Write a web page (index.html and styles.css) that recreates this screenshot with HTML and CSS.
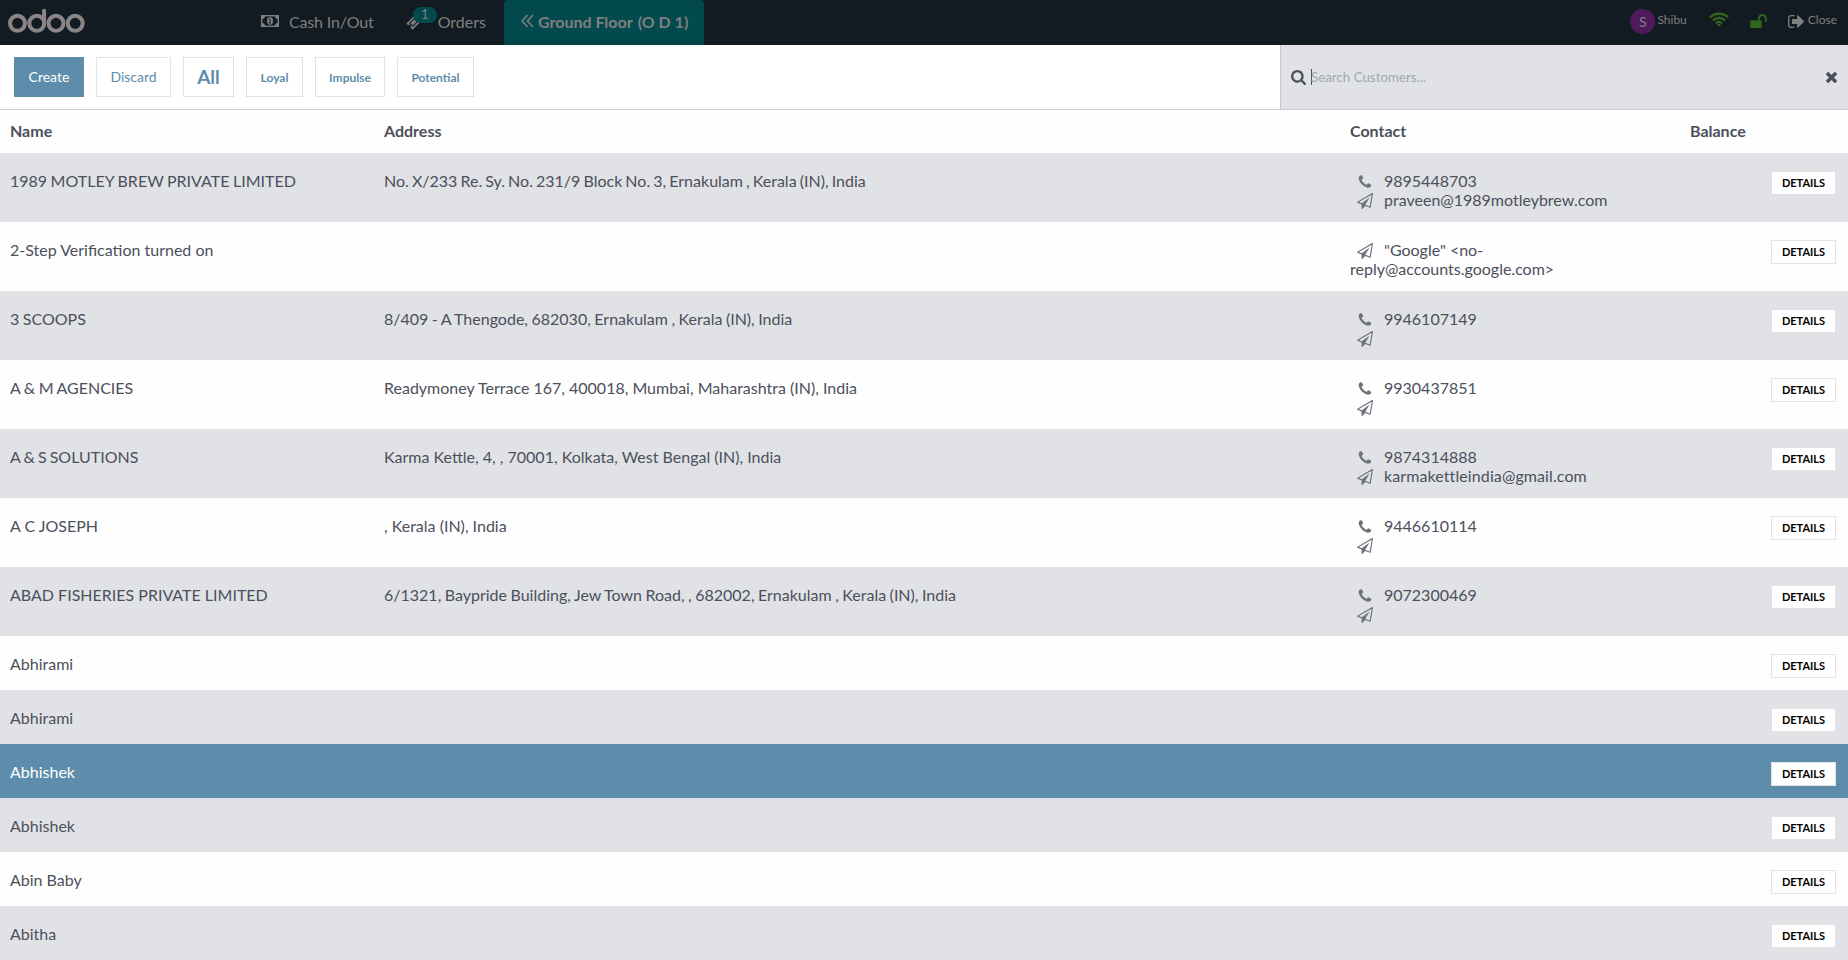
FILE: index.html
```html
<!DOCTYPE html>
<html lang="en">
<head>
<meta charset="utf-8">
<title>Odoo POS - Customers</title>
<link rel="stylesheet" href="styles.css">
</head>
<body>
<svg class="defs" width="0" height="0">
  <symbol id="phone" viewBox="0 0 1792 1792"><path d="M1600 1240q0 27-10 70.5t-21 68.5q-21 50-122 106-94 51-186 51-27 0-53-3.5t-57.5-12.5-47-14.5-55.5-20.5-49-18q-98-35-175-83-127-79-264-216t-216-264q-48-77-83-175-3-9-18-49t-20.5-55.5-14.5-47-12.5-57.5-3.5-53q0-92 51-186 56-101 106-122 25-11 68.5-21t70.5-10q14 0 21 3 18 6 53 76 11 19 30 54t35 63.5 31 53.5q3 4 17.5 25t21.5 35.5 7 28.5q0 20-28.5 50t-62 55-62 53-28.5 46q0 9 5 22.5t8.5 20.5 14 24 11.5 19q76 137 174 235t235 174q2 1 19 11.5t24 14 20.5 8.5 22.5 5q18 0 46-28.5t53-62 55-62 50-28.5q14 0 28.5 7t35.5 21.5 25 17.5q25 15 53.5 31t63.5 35 54 30q70 35 76 53 3 7 3 21z"/></symbol>
  <symbol id="plane" viewBox="0 0 1792 1792"><path d="M1764 11q33 24 27 64l-256 1536q-5 29-32 45-14 8-31 8-11 0-24-5l-527-215-298 327q-18 21-47 21-14 0-23-4-19-7-30-23.5t-11-36.5v-452l-472-193q-37-14-40-55-3-39 32-59l1664-960q35-21 68 2zm-342 1499l221-1323-1434 827 336 137 863-639-478 797z"/></symbol>
</svg>

<header class="topbar">
  <svg class="logo" viewBox="0 0 78 26" aria-label="odoo">
    <g fill="none" stroke="currentColor" stroke-width="4">
      <circle cx="9.5" cy="15.3" r="7.5"/><circle cx="28.8" cy="15.3" r="7.5"/>
      <circle cx="48" cy="15.3" r="7.5"/><circle cx="67.2" cy="15.3" r="7.5"/>
      <path d="M36.1 15.5V2.8" stroke-linecap="round"/>
    </g>
  </svg>
  <div class="nav-item cash">
    <svg class="money" viewBox="0 0 18 12"><rect x=".7" y=".7" width="16.6" height="10.6" fill="none" stroke="currentColor" stroke-width="1.4"/><path d="M1 1h3a3 3 0 0 1-3 3zM17 1v3a3 3 0 0 1-3-3zM1 11V8a3 3 0 0 1 3 3zM17 11h-3a3 3 0 0 1 3-3z" fill="currentColor"/><ellipse cx="9" cy="6" rx="3" ry="3.7" fill="currentColor"/><path d="M8 4.6l1-.7v4M7.9 8h2.2" fill="none" stroke="#131b22" stroke-width=".9"/></svg>
    <span>Cash In/Out</span>
  </div>
  <div class="nav-item orders">
    <span class="ticket-wrap">
      <svg class="ticket" viewBox="0 0 16 16"><path fill="currentColor" fill-rule="evenodd" d="M9 .4l1.7 1.7a1.9 1.9 0 0 0 2.7 2.7l2.2 2.2-8.6 8.6-2.2-2.2a1.9 1.9 0 0 0-2.7-2.7L.4 9zM8.7 3.2L3.2 8.7l4.1 4.1 5.5-5.5zM8.7 4.9l2.5 2.4-3.9 3.9-2.5-2.5z"/></svg>
      <span class="badge">1</span>
    </span>
    <span>Orders</span>
  </div>
  <div class="floor">
    <svg class="chev" viewBox="0 0 13 14"><path d="M6.6 1L1 7l5.6 6M12 1L6.4 7l5.6 6" fill="none" stroke="currentColor" stroke-width="1.6"/></svg>
    <span>Ground Floor</span><span class="table-name">(O D 1)</span>
  </div>
  <div class="status">
    <span class="avatar">S</span><span class="user">Shibu</span>
    <svg class="wifi" viewBox="0 0 20 15"><g fill="none" stroke="currentColor" stroke-width="2.4"><path d="M1 5.3a13 13 0 0 1 18 0"/><path d="M4 8.4a8.7 8.7 0 0 1 12 0"/><path d="M6.9 11.2a4.5 4.5 0 0 1 6.2 0"/></g><path fill="currentColor" d="M10 14.6l-2-2a3 3 0 0 1 4 0z"/></svg>
    <svg class="lock" viewBox="64 128 1664 1408"><path fill="currentColor" d="M1728 576v256q0 26-19 45t-45 19h-64q-26 0-45-19t-19-45v-256q0-106-75-181t-181-75-181 75-75 181v192h96q40 0 68 28t28 68v576q0 40-28 68t-68 28h-960q-40 0-68-28t-28-68v-576q0-40 28-68t68-28h672v-192q0-185 131.5-316.5t316.5-131.5 316.5 131.5 131.5 316.5z"/></svg>
    <svg class="out" viewBox="64 256 1568 1280"><path fill="currentColor" d="M704 1440q0 4 1 20t.5 26.5-3 23.5-10 19.5-20.5 6.5h-320q-119 0-203.5-84.5t-84.5-203.5v-704q0-119 84.5-203.5t203.5-84.5h320q13 0 22.5 9.5t9.5 22.5q0 4 1 20t.5 26.5-3 23.5-10 19.5-20.5 6.5h-320q-66 0-113 47t-47 113v704q0 66 47 113t113 47h312l11.5 1 11.5 3 8 5.5 7 9 2 13.5zm928-544q0 26-19 45l-544 544q-19 19-45 19t-45-19-19-45v-288h-448q-26 0-45-19t-19-45v-384q0-26 19-45t45-19h448v-288q0-26 19-45t45-19 45 19l544 544q19 19 19 45z"/></svg>
    <span class="close-label">Close</span>
  </div>
</header>

<div class="toolbar">
  <div class="buttons">
    <button class="btn primary w-create">Create</button>
    <button class="btn w-discard">Discard</button>
    <button class="btn all">All</button>
    <button class="btn tag w-loyal">Loyal</button>
    <button class="btn tag w-impulse">Impulse</button>
    <button class="btn tag w-potential">Potential</button>
  </div>
  <div class="search">
    <svg class="magnifier" viewBox="64 128 1664 1664"><path fill="currentColor" d="M1216 832q0-185-131.5-316.5t-316.5-131.5-316.5 131.5-131.5 316.5 131.5 316.5 316.5 131.5 316.5-131.5 131.5-316.5zm512 832q0 52-38 90t-90 38q-54 0-90-38l-343-342q-179 124-399 124-143 0-273.5-55.5t-225-150-150-225-55.5-273.5 55.5-273.5 150-225 225-150 273.5-55.5 273.5 55.5 225 150 150 225 55.5 273.5q0 220-124 399l343 343q37 37 37 90z"/></svg>
    <span class="caret"></span><span class="placeholder">Search Customers...</span>
    <svg class="clear" viewBox="302 366 1188 1188"><path fill="currentColor" d="M1490 1322q0 40-28 68l-136 136q-28 28-68 28t-68-28l-294-294-294 294q-28 28-68 28t-68-28l-136-136q-28-28-28-68t28-68l294-294-294-294q-28-28-28-68t28-68l136-136q28-28 68-28t68 28l294 294 294-294q28-28 68-28t68 28l136 136q28 28 28 68t-28 68l-294 294 294 294q28 28 28 68z"/></svg>
  </div>
</div>

<main class="list">
  <div class="row head"><div>Name</div><div>Address</div><div>Contact</div><div>Balance</div><div></div></div>
  <div class="row tall"><div class="snug">1989 MOTLEY BREW PRIVATE LIMITED</div><div class="tight">No. X/233 Re. Sy. No. 231/9 Block No. 3, Ernakulam , Kerala (IN), India</div><div class="contact"><svg><use href="#phone"/></svg>9895448703<br><svg><use href="#plane"/></svg>praveen@1989motleybrew.com</div><div></div><div class="act"><button class="details">DETAILS</button></div></div>
  <div class="row tall"><div>2-Step Verification turned on</div><div></div><div class="contact"><svg><use href="#plane"/></svg>"Google" &lt;no-reply@accounts.google.com&gt;</div><div></div><div class="act"><button class="details">DETAILS</button></div></div>
  <div class="row tall"><div class="snug">3 SCOOPS</div><div class="snug">8/409 - A Thengode, 682030, Ernakulam , Kerala (IN), India</div><div class="contact"><svg><use href="#phone"/></svg>9946107149<br><svg><use href="#plane"/></svg></div><div></div><div class="act"><button class="details">DETAILS</button></div></div>
  <div class="row tall"><div class="snug">A &amp; M AGENCIES</div><div>Readymoney Terrace 167, 400018, Mumbai, Maharashtra (IN), India</div><div class="contact"><svg><use href="#phone"/></svg>9930437851<br><svg><use href="#plane"/></svg></div><div></div><div class="act"><button class="details">DETAILS</button></div></div>
  <div class="row tall"><div class="tight">A &amp; S SOLUTIONS</div><div>Karma Kettle, 4, , 70001, Kolkata, West Bengal (IN), India</div><div class="contact"><svg><use href="#phone"/></svg>9874314888<br><svg><use href="#plane"/></svg><span class="wide">karmakettleindia@gmail.com</span></div><div></div><div class="act"><button class="details">DETAILS</button></div></div>
  <div class="row tall"><div>A C JOSEPH</div><div>, Kerala (IN), India</div><div class="contact"><svg><use href="#phone"/></svg>9446610114<br><svg><use href="#plane"/></svg></div><div></div><div class="act"><button class="details">DETAILS</button></div></div>
  <div class="row tall"><div>ABAD FISHERIES PRIVATE LIMITED</div><div class="snug">6/1321, Baypride Building, Jew Town Road, , 682002, Ernakulam , Kerala (IN), India</div><div class="contact"><svg><use href="#phone"/></svg>9072300469<br><svg><use href="#plane"/></svg></div><div></div><div class="act"><button class="details">DETAILS</button></div></div>
  <div class="row"><div>Abhirami</div><div></div><div></div><div></div><div class="act"><button class="details">DETAILS</button></div></div>
  <div class="row"><div>Abhirami</div><div></div><div></div><div></div><div class="act"><button class="details">DETAILS</button></div></div>
  <div class="row selected"><div>Abhishek</div><div></div><div></div><div></div><div class="act"><button class="details">DETAILS</button></div></div>
  <div class="row"><div>Abhishek</div><div></div><div></div><div></div><div class="act"><button class="details">DETAILS</button></div></div>
  <div class="row"><div>Abin Baby</div><div></div><div></div><div></div><div class="act"><button class="details">DETAILS</button></div></div>
  <div class="row"><div>Abitha</div><div></div><div></div><div></div><div class="act"><button class="details">DETAILS</button></div></div>
</main>
</body>
</html>
```
FILE: styles.css
```css
* { box-sizing: border-box; }
body {
  margin: 0;
  height: 960px;
  overflow: hidden;
  background: #fefefe;
  color: #4c505c;
  font: 16px/19px Lato, sans-serif;
}
button { font-family: inherit; margin: 0; padding: 0; border-radius: 0; }
svg { flex: none; }
.defs { display: block; height: 0; }

.topbar {
  display: flex;
  height: 45px;
  background: #131b22;
  color: #807f7f;
}
.logo { width: 78px; height: 26px; margin: 8px 0 0 8px; color: #898585; }
.nav-item { display: flex; align-items: center; height: 43px; padding-bottom: 1px; }
.cash { margin-left: 175px; gap: 10px; letter-spacing: -.15px; }
.money { width: 18px; height: 12px; }
.orders { margin-left: 32px; }
.ticket-wrap { position: relative; width: 32px; height: 42px; }
.ticket { display: block; width: 15px; height: 15px; margin-top: 15px; }
.badge {
  position: absolute;
  left: 7px;
  top: 7px;
  width: 24px;
  height: 16px;
  border-radius: 8px;
  background: #034a4e;
  font-size: 13px;
  line-height: 15px;
  text-align: center;
}
.floor {
  display: flex;
  align-items: center;
  width: 200px;
  height: 45px;
  margin-left: 18px;
  padding: 0 0 3px 17px;
  border-radius: 4px 4px 0 0;
  background: #034a4e;
  box-shadow: inset 0 -4px 6px -3px #023b3e;
  font-weight: 700;
}
.chev { width: 13px; height: 14px; margin-right: 4px; }
.table-name { margin-left: 5px; }
.status {
  display: flex;
  flex: 1;
  justify-content: flex-end;
  padding-right: 11px;
  font-size: 12px;
  line-height: 40px;
}
.avatar {
  width: 25px;
  height: 25px;
  margin-top: 9px;
  border-radius: 50%;
  background: #4f1a5c;
  font-size: 14px;
  line-height: 25px;
  text-align: center;
}
.user { margin-left: 2px; }
.wifi { width: 20px; height: 15px; margin: 12px 0 0 22px; color: #32651c; }
.lock { width: 17px; height: 14px; margin: 14px 0 0 21px; color: #32651c; }
.out { width: 16px; height: 13px; margin: 15px 4px 0 21px; }

.toolbar { display: flex; height: 65px; border-bottom: 1px solid #c8cad0; }
.buttons {
  display: flex;
  flex: 1;
  gap: 12px;
  padding: 12px 14px;
  background: #fff;
}
.btn {
  height: 40px;
  padding-bottom: 1px;
  border: 1px solid #e0e2e6;
  background: #fff;
  color: #5d8daa;
  font-size: 14px;
}
.primary { border-color: #5d8daa; background: #5d8daa; color: #fff; }
.w-create { width: 70px; }
.w-discard { width: 75px; }
.all { width: 51px; padding-bottom: 2px; font-size: 19px; font-weight: 700; }
.tag { padding-bottom: 0; font-size: 12px; font-weight: 700; }
.w-loyal { width: 57px; }
.w-impulse { width: 70px; }
.w-potential { width: 77px; }
.search {
  display: flex;
  align-items: center;
  width: 568px;
  padding: 0 11px 0 10px;
  border-left: 1px solid #c8cad0;
  background: #e0e2e6;
}
.magnifier { width: 15px; height: 15px; margin-top: 1px; }
.caret { width: 1px; height: 16px; margin: 0 0 0 5px; background: #4c505c; }
.placeholder { flex: 1; margin-left: -1px; color: #a1a8b0; font-size: 13.33px; }
.clear { width: 11px; height: 11px; margin-top: 1px; }

.row {
  display: grid;
  grid-template-columns: 374px 966px 340px 80px 1fr;
  height: 54px;
}
.row > div { padding: 18px 10px 0; }
.row:nth-child(even) { background: #e0e2e6; }
.row.tall { height: 69px; }
.row.head { height: 43px; font-weight: 700; }
.row.head > div { padding-top: 11px; }
.row .contact { padding-right: 50px; }
.tight { word-spacing: -1px; }
.snug { word-spacing: -.6px; }
.wide { letter-spacing: .1px; }
.contact svg {
  width: 16px;
  height: 16px;
  margin: 0 11px 0 7px;
  vertical-align: -3px;
  fill: #6d717b;
}
.row.selected { background: #5d8daa; color: #fff; }
.row > .act { padding: 18px 12px 0 0; text-align: right; }
.details {
  display: block;
  width: 65px;
  height: 24px;
  padding-bottom: 1px;
  margin-left: auto;
  border: 1px solid #e0e2e6;
  background: #fff;
  color: #000;
  font-size: 11px;
  font-weight: 700;
}
```
